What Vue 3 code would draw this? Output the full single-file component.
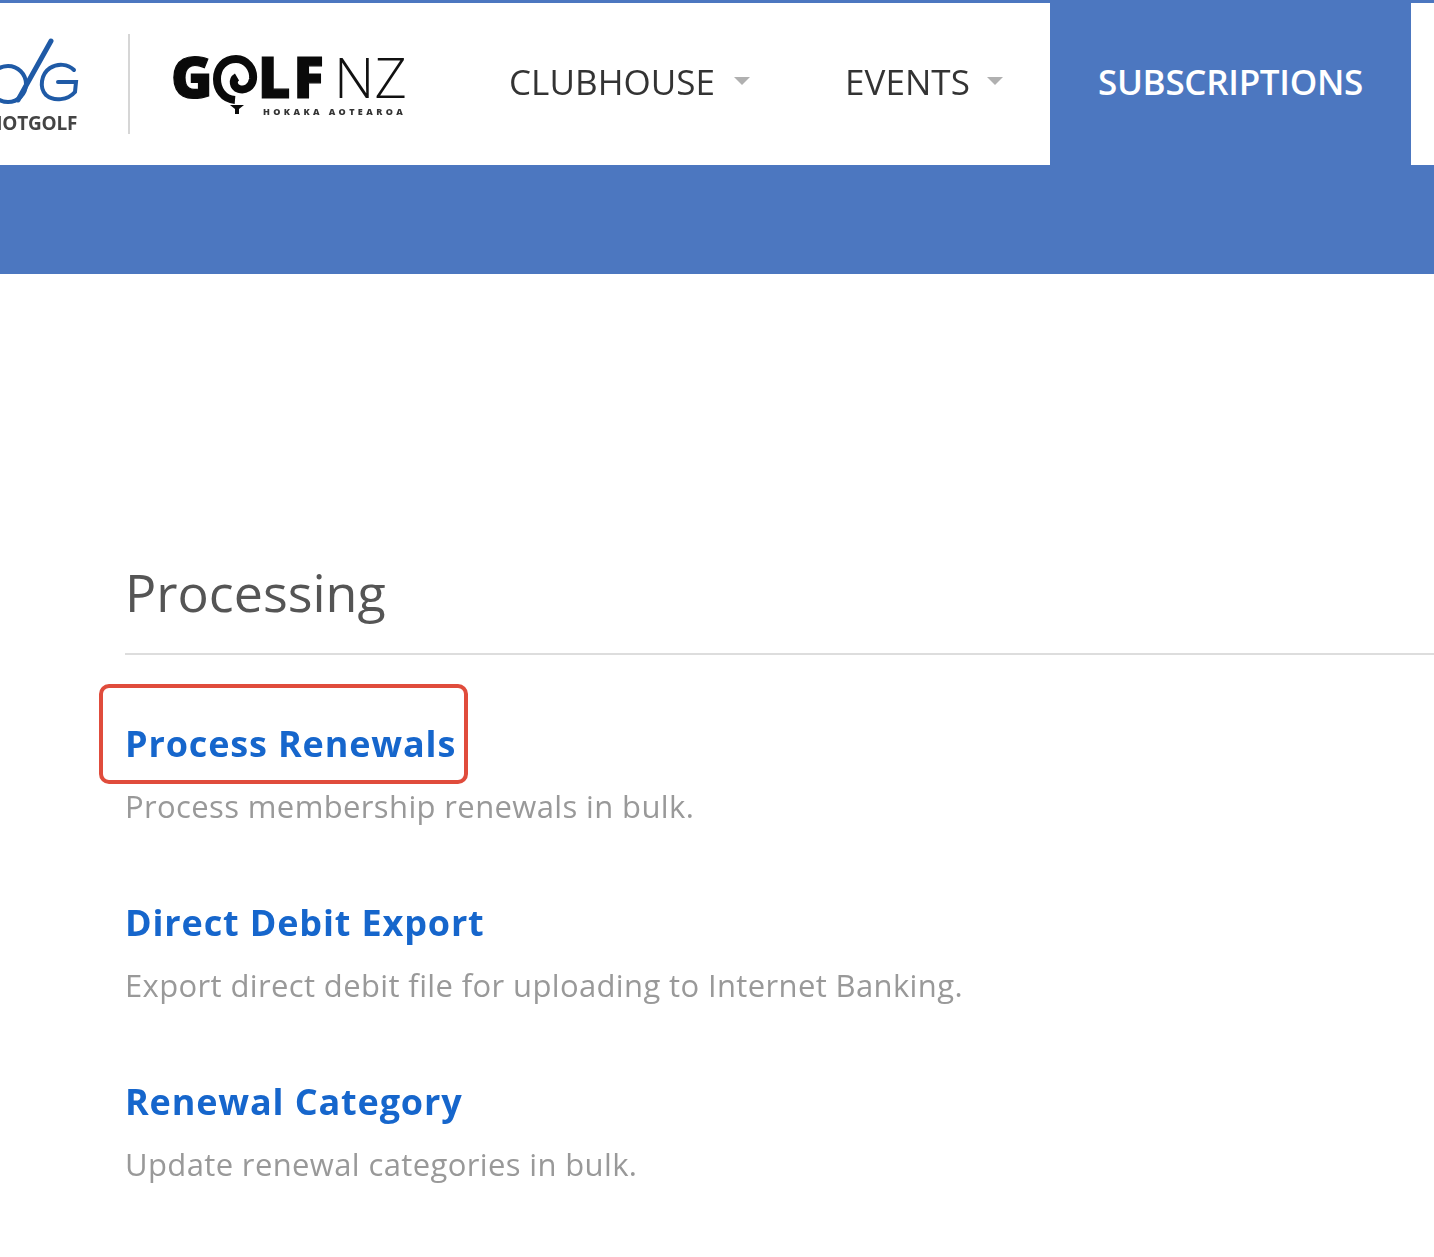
<template>
  <div class="page">
    <header class="topbar">
      <div class="logos">
        <svg class="logo-hot" width="80" height="100" viewBox="0 0 80 100">
          <g fill="none" stroke="#1f5aa6" stroke-linecap="round">
            <circle cx="8" cy="50" r="18" stroke-width="4" />
            <path d="M18 66 L51 7" stroke-width="5" />
            <path d="M74 36 C68 30 58 29 50 34 C41 40 39 54 46 61 C54 68 68 66 75 58 L76 48 L58 48" stroke-width="4" />
          </g>
          <text x="-12" y="96" class="hot-text">HOTGOLF</text>
        </svg>
        <span class="divider"></span>
        <svg class="logo-nz" width="236" height="100" viewBox="0 0 236 100">
          <text x="-2" y="64" class="nz-bold">G</text>
          <path
            d="M62 66 C50 65 44 55 44 45 C44 33 52 25 63 25 C74 25 81 35 80 45 C79 53 72 57 66 55 C60 53 59 46 64 43"
            fill="none"
            stroke="#0a0a0a"
            stroke-width="8"
          />
          <path d="M57 71 H71 L66 75 V80 H62 V75 Z" fill="#0a0a0a" />
          <text x="85" y="64" class="nz-bold nz-lf">LF</text>
          <text x="161" y="64" class="nz-light">NZ</text>
          <text x="90" y="81" class="nz-small">HOKAKA AOTEAROA</text>
        </svg>
      </div>

      <nav class="nav">
        <a class="nav-item nav-clubhouse">CLUBHOUSE<i class="caret"></i></a>
        <a class="nav-item nav-events">EVENTS<i class="caret"></i></a>
        <a class="nav-item nav-active">SUBSCRIPTIONS</a>
      </nav>
    </header>
    <div class="band"></div>

    <main class="content">
      <h1 class="heading">Processing</h1>
      <section v-for="item in items" :key="item.title" class="row">
        <a class="row-title" :class="{ boxed: item.boxed }">{{ item.title }}</a>
        <p class="row-text">{{ item.text }}</p>
      </section>
    </main>
  </div>
</template>

<script setup>
const items = [
  { title: 'Process Renewals', text: 'Process membership renewals in bulk.', boxed: true },
  { title: 'Direct Debit Export', text: 'Export direct debit file for uploading to Internet Banking.' },
  { title: 'Renewal Category', text: 'Update renewal categories in bulk.' }
]
</script>

<style>
html, body {
  margin: 0;
  background: #fff;
  overflow: hidden;
}
</style>

<style scoped>
.page {
  width: 1434px;
  height: 1257px;
  overflow: hidden;
  font-family: "Open Sans", "Liberation Sans", sans-serif;
  background: #fff;
}

.topbar {
  display: flex;
  align-items: stretch;
  height: 162px;
  border-top: 3px solid #4c77c0;
  background: #fff;
}

.logos {
  display: flex;
  align-items: center;
  width: 509px;
  flex: none;
}

.logo-hot {
  flex: none;
  filter: blur(0.7px);
}

.hot-text {
  font-family: "Open Sans", sans-serif;
  font-size: 19px;
  font-weight: 700;
  letter-spacing: -0.2px;
  fill: #444;
}

.divider {
  width: 2px;
  height: 100px;
  margin-left: 48px;
  background: #d6d6d6;
  flex: none;
}

.logo-nz {
  margin-left: 43px;
  flex: none;
  filter: blur(0.7px);
}

.nz-bold {
  font-family: "Open Sans", sans-serif;
  font-size: 56px;
  font-weight: 800;
  fill: #0a0a0a;
  stroke: #0a0a0a;
  stroke-width: 1.2px;
}

.nz-lf {
  letter-spacing: 3px;
}

.nz-light {
  font-family: "Open Sans", sans-serif;
  font-size: 56px;
  font-weight: 300;
  fill: #111;
}

.nz-small {
  font-family: "Open Sans", sans-serif;
  font-size: 9px;
  font-weight: 800;
  letter-spacing: 3.4px;
  fill: #333;
}

.nav {
  display: flex;
  align-items: stretch;
}

.nav-item {
  display: flex;
  align-items: center;
  padding-bottom: 6px;
  box-sizing: border-box;
  font-size: 35px;
  letter-spacing: 0.05px;
  color: #333;
  filter: blur(0.4px);
}

.nav-clubhouse {
  width: 336px;
}

.nav-events {
  width: 205px;
}

.nav-events .caret {
  margin-left: 17px;
}

.nav-active {
  width: 361px;
  justify-content: center;
  color: #fff;
  font-weight: 600;
  letter-spacing: -0.3px;
  background: #4c77c0;
  filter: none;
}

.caret {
  width: 0;
  height: 0;
  margin-left: 19px;
  border-left: 8px solid transparent;
  border-right: 8px solid transparent;
  border-top: 8px solid #b0b0b0;
}

.band {
  height: 109px;
  background: #4c77c0;
}

.content {
  padding: 282px 0 0 125px;
}

.heading {
  margin: 0;
  padding-bottom: 25px;
  font-size: 52px;
  line-height: 72px;
  font-weight: 400;
  color: #555;
  border-bottom: 2px solid #ddd;
}

.row {
  padding-top: 64px;
  height: 115px;
}

.row-title {
  position: relative;
  display: block;
  width: max-content;
  font-size: 36px;
  line-height: 50px;
  font-weight: 700;
  letter-spacing: 0.85px;
  color: #1666cc;
  filter: blur(0.3px);
}

.boxed::after {
  content: "";
  position: absolute;
  left: -26px;
  right: -12px;
  top: -35px;
  bottom: -15px;
  border: 4px solid #e04c3c;
  border-radius: 10px;
}

.row-text {
  margin: 16px 0 0;
  font-size: 31px;
  line-height: 42px;
  color: #999;
  letter-spacing: 0.37px;
  filter: blur(0.3px);
}
</style>
